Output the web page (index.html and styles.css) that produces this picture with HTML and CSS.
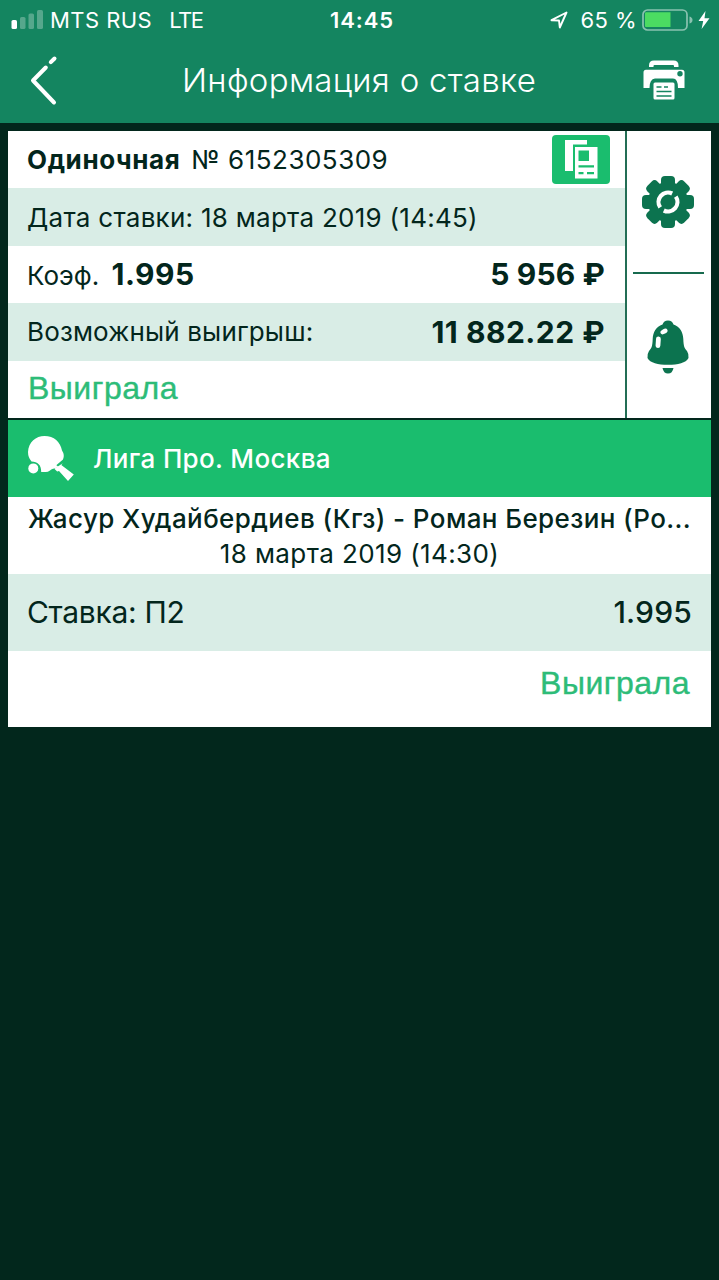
FILE: index.html
```html
<!DOCTYPE html>
<html lang="ru">
<head>
<meta charset="utf-8">
<title>Информация о ставке</title>
<link rel="stylesheet" href="styles.css">
</head>
<body>
<header class="header">
  <div class="status">
    <div class="status-left">
      <svg class="signal" width="33" height="20" viewBox="0 0 33 20"><rect x="0.5" y="10" width="5.5" height="9" rx="1.6" fill="#fff"/><g fill="#fff" opacity=".28"><rect x="9" y="7" width="5.5" height="12" rx="1.6"/><rect x="17.5" y="3.500" width="5.500" height="15.500" rx="1.600"/><rect x="26" y="0" width="6" height="19" rx="1.600"/></g></svg>
      <span class="carrier">MTS RUS</span>
      <span class="network">LTE</span>
    </div>
    <time class="clock">14:45</time>
    <div class="status-right">
      <svg width="18" height="18" viewBox="0 0 18 18"><path d="M1.500 9.200 16.500 1.500 9.800 16.500 9 9.500Z" fill="none" stroke="#fff" stroke-width="1.900" stroke-linejoin="round"/></svg>
      <span class="percent">65 %</span>
      <svg class="battery" width="52" height="22" viewBox="0 0 52 22"><rect x="1" y="1" width="44" height="20" rx="4.500" fill="none" stroke="#fff" stroke-opacity=".5" stroke-width="1.700"/><path d="M4 3.300H28.500V18H4q-1 0-1-1V4.300q0-1 1-1Z" fill="#4bdc62"/><path d="M47.500 7.500q3 1 3 3.500t-3 3.500Z" fill="#fff" opacity=".5"/></svg>
      <svg width="12" height="18" viewBox="0 0 12 18"><path d="M7.500 0 .500 10H5.200L3.600 18 11.500 7.300H6.500Z" fill="#fff"/></svg>
    </div>
  </div>
  <nav class="navbar">
    <svg class="back" width="30" height="52" viewBox="0 0 30 52"><path d="M25.500 4.500 21.800 8.200M16.800 13.500 4 26.500 25 48.500" fill="none" stroke="#fff" stroke-width="4" stroke-linecap="round" stroke-linejoin="round"/></svg>
    <h1 class="title">Информация о ставке</h1>
    <svg class="printer" width="42" height="40" viewBox="0 0 42 40"><path d="M6 7V5.500Q6 .500 11 .500H30.500Q35.500 .500 35.500 5.500V7H31V6Q31 5 30 5H11.500Q10.500 5 10.500 6V7Z" fill="#fff"/><path d="M3 9.800H39Q41.500 9.800 41.500 12.500V28H35Q35 18.500 30 18.500H12Q6.500 19 6.500 28H.500V12.500Q.500 9.800 3 9.800Z" fill="#fff"/><circle cx="37" cy="13.800" r="2.700" fill="#148560"/><rect x="10.500" y="22.500" width="21" height="17" rx="1.500" fill="#fff"/><path d="M13.500 27H18.500M21 27H25M13.500 31.500H28.500M13.500 36H28.500" stroke="#148560" stroke-width="1.700"/></svg>
  </nav>
</header>

<main class="bet">
  <section class="summary">
    <div class="rows">
      <div class="row"><p><b class="type">Одиночная</b><span class="number">№ 6152305309</span></p>
        <svg class="copy" width="58" height="49" viewBox="0 0 58 49"><rect width="58" height="49" rx="4" fill="#1abd6e"/><path d="M13 5H35V9.500H21V36H13Z" fill="#fff"/><rect x="23" y="12" width="22.500" height="31.500" fill="#fff"/><path d="M26.500 15.500H37V26H26.500Z" fill="#1abd6e"/><path d="M26.500 31.300H42M26.500 38.200H31.500M35 38.200H42" stroke="#1abd6e" stroke-width="2.200"/></svg>
      </div>
      <div class="row tint"><p class="date">Дата ставки: 18 марта 2019 (14:45)</p></div>
      <div class="row"><p class="odds"><span>Коэф.</span> <b>1.995</b></p><b class="money stake">5 956 ₽</b></div>
      <div class="row tint"><p class="payout">Возможный выигрыш:</p><b class="money win">11 882.22 ₽</b></div>
      <div class="row"><strong class="result">Выиграла</strong></div>
    </div>
    <aside class="actions">
      <button class="action" aria-label="Настройки">
        <svg width="52" height="52" viewBox="-26 -26 52 52"><g fill="#0c734f"><circle r="20"/><g id="teeth"><rect x="-7" y="-26" width="14" height="52" rx="4"/><rect x="-26" y="-7" width="52" height="14" rx="4"/></g><use href="#teeth" transform="rotate(45)"/></g><path d="M-7.800 5.400A9.500 9.500 0 0 1 4.200-8.500M7.800-5.400A9.500 9.500 0 0 1-4.200 8.500" fill="none" stroke="#fff" stroke-width="4.200"/></svg>
      </button>
      <button class="action" aria-label="Уведомления">
        <svg width="42" height="54" viewBox="0 0 42 54"><path d="M21 .500C24 .500 25.500 2 26.500 4.500 33 7 36 12 36.300 19 36.600 27 37.500 28 40 31Q42 34 41.500 38C39 43 31 44.800 21 44.800S3 43 .500 38Q0 34 2 31C4.500 28 5.400 27 5.700 19 6 12 9 7 15.500 4.500 16.500 2 18 .500 21 .500Z" fill="#0c734f"/><rect x="8.800" y="16.500" width="4.800" height="11.500" rx="2.400" fill="#fff" transform="rotate(4 11 22)"/><ellipse cx="17" cy="11.500" rx="3.800" ry="2.400" fill="#fff" transform="rotate(-28 17 11.500)"/><path d="M15.500 48H26.500Q25.500 53.500 21 53.500T15.500 48Z" fill="#0c734f"/></svg>
      </button>
    </aside>
  </section>

  <section class="event">
    <h2 class="league">
      <svg width="48" height="47" viewBox="0 0 48 47"><path d="M4.500 26.500Q1 22.500 1 17C1.500 7 9 1 17.500 1 27 1 33.500 7 35 15.500Q38 20 36 24.500L23 35.500Q20.500 37.500 17.500 37H14.200C14.500 30 10.500 26.500 4.500 26.500Z" fill="#fff"/><path d="M35.800 28.200 34.300 30 46.800 39.500 41 46 32 36 30.200 36.500 27.300 33.700Z" fill="#fff"/><path d="M24 34.500 28.500 29.500 31.500 32Z" fill="#fff"/><circle cx="6.300" cy="33.400" r="5" fill="#fff"/></svg>
      <span>Лига Про. Москва</span>
    </h2>
    <div class="match">
      <p class="teams">Жасур Худайбердиев (Кгз) - Роман Березин (Ро...</p>
      <p class="when">18 марта 2019 (14:30)</p>
    </div>
    <div class="pick tint"><span class="pick-name">Ставка: П2</span><span class="pick-odds">1.995</span></div>
    <div class="outcome"><strong class="result">Выиграла</strong></div>
  </section>
</main>
</body>
</html>
```

FILE: styles.css
```css
* { box-sizing: border-box; margin: 0; padding: 0; }
body {
  min-height: 1280px;
  background: #02271c;
  color: #03261c;
  font-family: Inter, "Liberation Sans", sans-serif;
  font-size: 26px;
  white-space: nowrap;
}
svg { display: block; flex: none; }
.header { height: 123px; background: #148560; color: #fff; }
.status {
  display: grid;
  grid-template-columns: 1fr auto 1fr;
  align-items: center;
  height: 39px;
  padding: 0 9px 0 11px;
  font-size: 22px;
}
.status-left, .status-right { display: flex; align-items: center; }
.status-right { justify-content: flex-end; }
.carrier { margin-left: 6px; letter-spacing: 0.45px; }
.network { margin-left: 17px; letter-spacing: -1.5px; }
.clock { padding-left: 3px; font-weight: 600; letter-spacing: 0.9px; }
.percent { margin: 0 5px 0 13px; letter-spacing: 0.4px; }
.battery { margin-right: 4px; }
.navbar {
  display: flex;
  align-items: center;
  height: 84px;
  padding: 0 34px 2px 29px;
}
.title { margin: 0 auto 0 123px; font-size: 33px; font-weight: 350; letter-spacing: 0.3px; }
.bet { margin: 8px 8px 0; }
.summary { display: flex; height: 289px; background: #fff; border-bottom: 2px solid #02271c; }
.rows { width: 617px; display: grid; grid-template-rows: repeat(5, 1fr); }
.row { display: flex; align-items: center; justify-content: space-between; padding: 0 20px 0 19px; }
.tint { background: #d9ede6; }
.type { margin-right: 11px; font-weight: 700; letter-spacing: 0.6px; }
.number { letter-spacing: 0.5px; }
.date { letter-spacing: 0.27px; }
.payout { letter-spacing: 0.15px; }
.copy { margin-right: -5px; }
.odds b { margin-left: 5px; font-size: 30px; font-weight: 700; letter-spacing: 0.5px; }
.money { font-size: 30px; font-weight: 700; }
.stake { letter-spacing: 0.15px; }
.win { letter-spacing: 0.5px; }
.result { color: #2dbc78; font: 400 32px/1 "Liberation Sans", sans-serif; letter-spacing: 0.5px; -webkit-text-stroke: 0.4px #2dbc78; }
.row .result { margin: 0 0 2px 1px; }
.actions { flex: 1; display: grid; grid-template-rows: 141px 1fr; border-left: 2px solid #236e55; padding: 0 7px 0 6px; }
.action { display: flex; align-items: center; justify-content: center; padding: 1px 1px 0 0; border: 0; background: none; }
.action + .action { border-top: 2px solid #176a4e; }
.league { display: flex; align-items: center; height: 77px; padding: 0 19px; gap: 18px; background: #1abd6e; color: #fff; font-size: 26px; font-weight: 500; letter-spacing: 0.35px; }
.match { height: 77px; padding: 4px 20px 0; background: #fff; text-align: center; line-height: 35px; }
.teams { text-align: left; font-weight: 500; letter-spacing: 0.4px; }
.when { letter-spacing: 0.4px; }
.pick { display: flex; align-items: center; justify-content: space-between; height: 77px; padding: 0 19px 2px; font-size: 30px; }
.pick-name { letter-spacing: -0.3px; }
.pick-odds { font-weight: 500; letter-spacing: 0.2px; }
.outcome { display: flex; align-items: center; justify-content: flex-end; height: 76px; padding: 0 21px 12px; background: #fff; }
```
